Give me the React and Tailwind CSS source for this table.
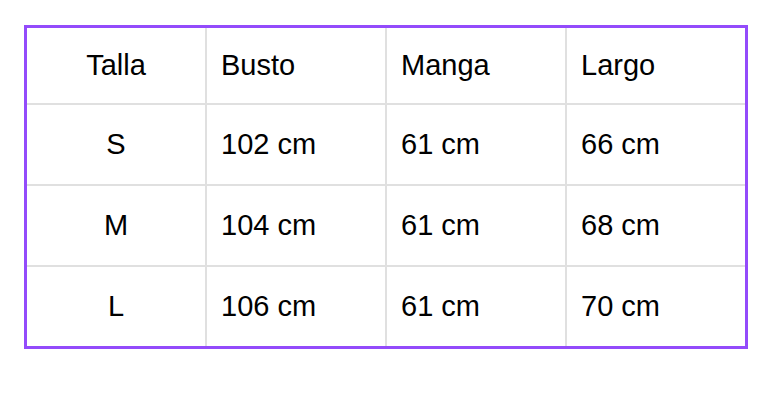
const rows = [
  ["S", "102 cm", "61 cm", "66 cm"],
  ["M", "104 cm", "61 cm", "68 cm"],
  ["L", "106 cm", "61 cm", "70 cm"],
];

const header = ["Talla", "Busto", "Manga", "Largo"];

function Row({ cells, head }) {
  return (
    <>
      {cells.map((c, i) => (
        <div
          key={i}
          className={
            "flex items-center text-[29px] text-black " +
            (head ? "h-[75px] " : "h-[81px] border-t-2 border-[#e0e0e0] ") +
            (i === 0 ? "justify-center" : "border-l-2 border-[#e0e0e0] pl-[14px]")
          }
        >
          {c}
        </div>
      ))}
    </>
  );
}

export default function App() {
  return (
    <div
      className="w-[776px] h-[402px] bg-white pt-[25px] pl-[24px]"
      style={{ fontFamily: '"Liberation Sans", Arial, sans-serif' }}
    >
      <div className="w-[724px] border-[3px] border-[#934bfb] grid grid-cols-[178px_180px_180px_180px]">
        <Row cells={header} head />
        {rows.map((r, i) => (
          <Row key={i} cells={r} />
        ))}
      </div>
    </div>
  );
}
